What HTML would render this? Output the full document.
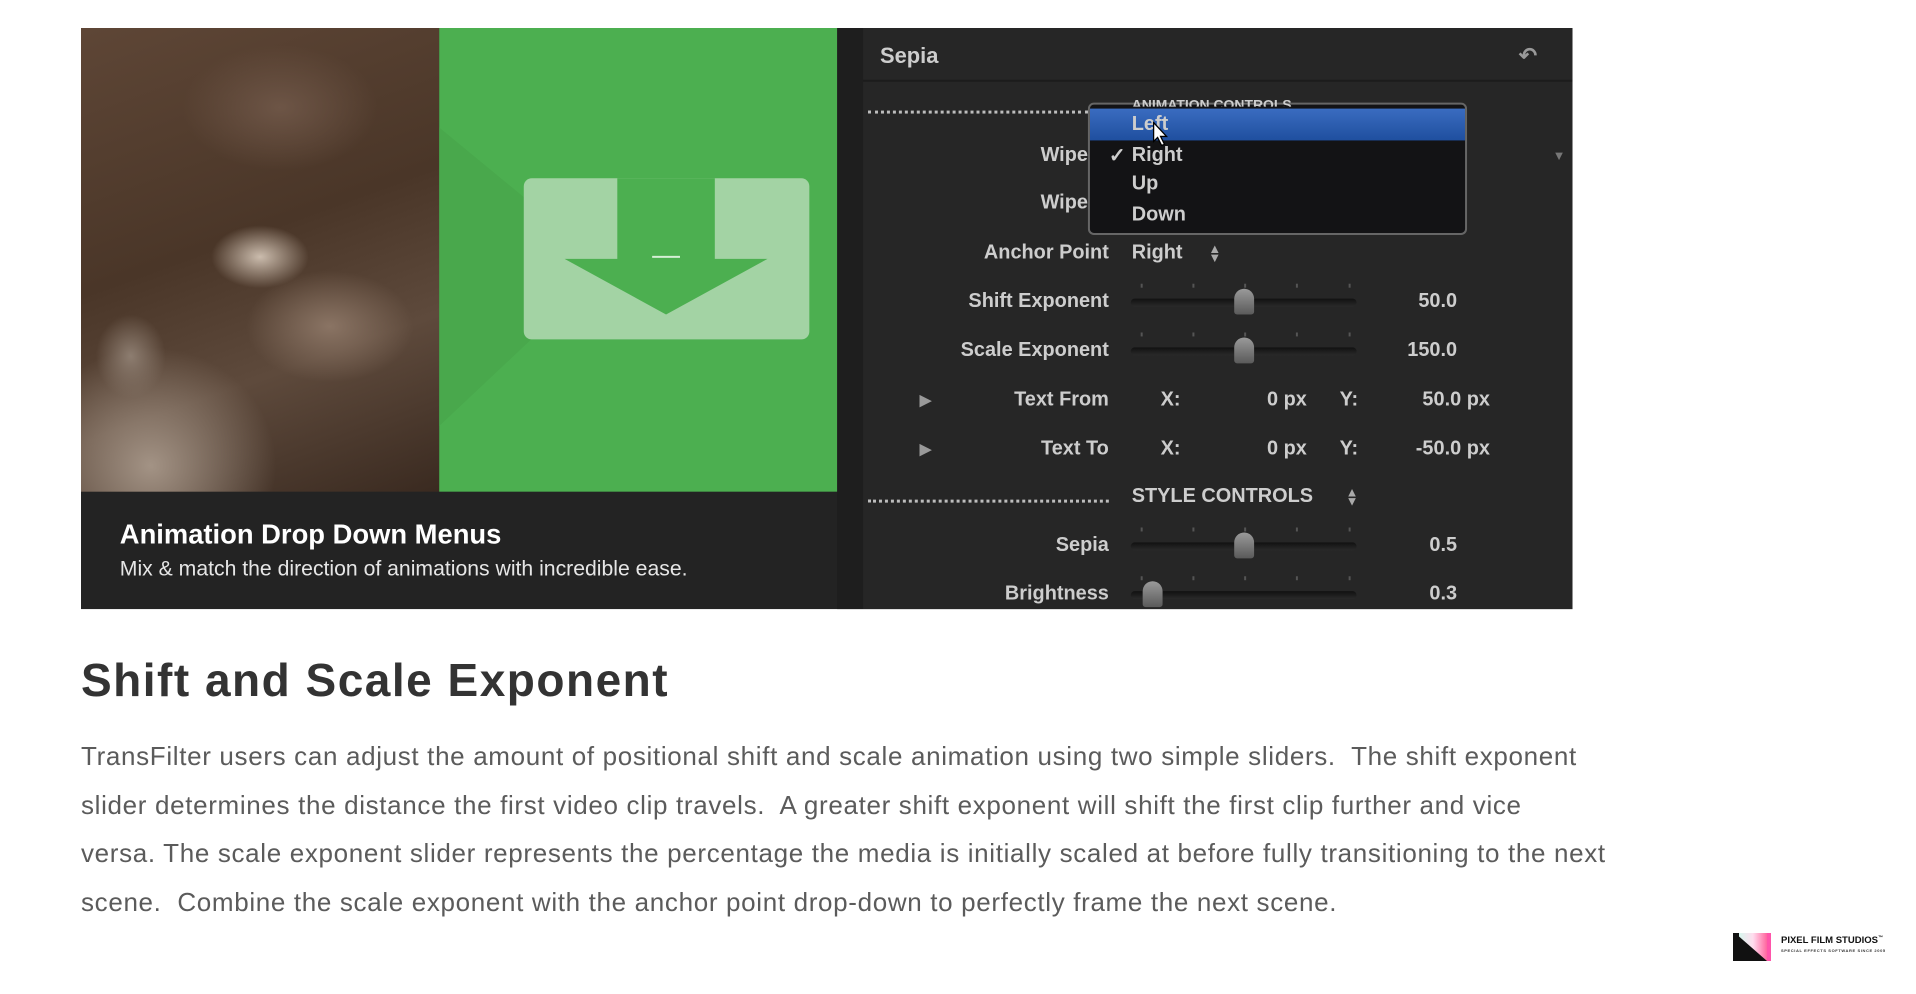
<!DOCTYPE html>
<html><head><meta charset="utf-8"><style>
*{margin:0;padding:0;box-sizing:border-box}
body{width:1916px;height:994px;background:#fff;position:relative;overflow:hidden;font-family:"Liberation Sans",Arial,sans-serif}
.a{position:absolute;white-space:nowrap}
.p{color:#cdcdcd;font-size:20px;font-weight:bold;transform:translateY(-50%)}
.r{text-align:right}
.dots{position:absolute;height:3px;border-top:3px dotted #bdbdbd}
.sl{position:absolute;left:1136px;width:227px;height:8px;border-radius:4px;background:linear-gradient(#111,#2a2a2a)}
.tick{position:absolute;width:2px;height:4px;background:#555}
.th{position:absolute;width:20px;height:26px;background:linear-gradient(#9a9a9a,#5a5a5a);border-radius:10px 10px 3px 3px}
.para{left:81px;font-size:26px;letter-spacing:0.66px;color:#5b5b5b;line-height:49px}
#img{position:absolute;left:0;top:0;width:1916px;height:640px;transform:scale(0.995);transform-origin:81px 28px}
</style></head><body>
<div id="img">
<div class="a" style="left:81px;top:28px;width:1499px;height:584px;background:#232323"></div>
<div class="a" style="left:81px;top:28px;width:360px;height:466px;background:
radial-gradient(ellipse 70px 45px at 180px 230px,#cbbcad,transparent 70%),
radial-gradient(ellipse 50px 60px at 50px 330px,#8d7d70,transparent 70%),
radial-gradient(ellipse 180px 170px at 70px 440px,#a39385,transparent 70%),
radial-gradient(ellipse 120px 80px at 250px 300px,#8a7464,transparent 70%),
radial-gradient(ellipse 140px 90px at 200px 80px,#6d5546,transparent 70%),
linear-gradient(160deg,#5e4636,#4a3628 45%,#5e4a3c 70%,#3a2a20)"></div>
<div class="a" style="left:441px;top:28px;width:400px;height:466px;background:#4caf50"></div>
<svg class="a" style="left:441px;top:28px" width="400" height="466">
<polygon points="0,100 170,240 0,400" fill="#49a84c"/>
<rect x="85" y="151" width="287" height="162" rx="8" fill="#a3d3a4"/>
<polygon points="179,151 277,151 277,232 330,232 228,288 126,232 179,232" fill="#4caf50"/>
<rect x="214" y="229" width="28" height="2" fill="#d6efd6"/>
</svg>
<div class="a" style="left:120px;top:521px;color:#fff;font-size:27.5px;font-weight:bold">Animation Drop Down Menus</div>
<div class="a" style="left:120px;top:559px;color:#e6e6e6;font-size:21.3px">Mix &amp; match the direction of animations with incredible ease.</div>
<div class="a" style="left:841px;top:28px;width:26px;height:584px;background:#1e1e1e"></div>
<div class="a" style="left:867px;top:28px;width:713px;height:584px;background:#262626"></div>
<div class="a" style="left:867px;top:80px;width:713px;height:2px;background:#1c1c1c"></div>
<div class="a p" style="left:884px;top:56px;font-size:22px">Sepia</div>
<div class="a p" style="left:1526px;top:56px;font-size:22px;color:#999">↶</div>
<div class="dots" style="left:872px;top:111px;width:221px"></div>
<div class="a p" style="left:1560px;top:156px;font-size:13px;color:#777">▼</div>
<div class="a p r" style="right:823px;top:156px">Wipe</div>
<div class="a p r" style="right:823px;top:204px">Wipe</div>
<div class="a" style="left:1093px;top:103px;width:381px;height:133px;background:#131315;border:2px solid #666;border-radius:6px;overflow:hidden">
<div style="position:absolute;left:0;top:4px;width:100%;height:32px;background:linear-gradient(#3a6cc0,#1f4f9f)"></div>
</div>
<div class="a" style="left:1137px;top:93px;width:200px;height:14px;color:#cdcdcd;font-size:14px;font-weight:bold;overflow:hidden;line-height:24px">ANIMATION CONTROLS</div>
<div class="a p" style="left:1137px;top:125px">Left</div>
<div class="a p" style="left:1114px;top:156px">✓</div>
<div class="a p" style="left:1137px;top:156px">Right</div>
<div class="a p" style="left:1137px;top:185px">Up</div>
<div class="a p" style="left:1137px;top:216px">Down</div>
<svg class="a" style="left:1158px;top:122px" width="16" height="26"><path d="M1 1 L1 20 L5 16 L9 24 L12 23 L8 15 L14 15 Z" fill="#fff" stroke="#000" stroke-width="1.3"/></svg>
<div class="a p r" style="right:802px;top:254px">Anchor Point</div>
<div class="a p" style="left:1137px;top:254px">Right</div>
<div class="a p" style="left:1214px;top:254px;font-size:13px;line-height:9px;color:#aaa">▲<br>▼</div>
<div class="a p r" style="right:802px;top:303px">Shift Exponent</div>
<div class="sl" style="top:300px"></div><div class="th" style="left:1240px;top:290px"></div>
<div class="a p r" style="right:452px;top:303px">50.0</div>
<div class="a p r" style="right:802px;top:352px">Scale Exponent</div>
<div class="sl" style="top:349px"></div><div class="th" style="left:1240px;top:339px"></div>
<div class="a p r" style="right:452px;top:352px">150.0</div>
<div class="a p" style="left:924px;top:402px;font-size:15px;color:#999">▶</div>
<div class="a p r" style="right:802px;top:402px">Text From</div>
<div class="a p" style="left:1166px;top:402px">X:</div>
<div class="a p r" style="right:603px;top:402px">0 px</div>
<div class="a p" style="left:1346px;top:402px">Y:</div>
<div class="a p r" style="right:419px;top:402px">50.0 px</div>
<div class="a p" style="left:924px;top:451px;font-size:15px;color:#999">▶</div>
<div class="a p r" style="right:802px;top:451px">Text To</div>
<div class="a p" style="left:1166px;top:451px">X:</div>
<div class="a p r" style="right:603px;top:451px">0 px</div>
<div class="a p" style="left:1346px;top:451px">Y:</div>
<div class="a p r" style="right:419px;top:451px">-50.0 px</div>
<div class="dots" style="left:872px;top:502px;width:242px"></div>
<div class="a p" style="left:1137px;top:499px">STYLE CONTROLS</div>
<div class="a p" style="left:1352px;top:499px;font-size:13px;line-height:9px;color:#aaa">▲<br>▼</div>
<div class="a p r" style="right:802px;top:548px">Sepia</div>
<div class="sl" style="top:545px"></div><div class="th" style="left:1240px;top:535px"></div>
<div class="a p r" style="right:452px;top:548px">0.5</div>
<div class="a p r" style="right:802px;top:597px">Brightness</div>
<div class="sl" style="top:594px"></div><div class="th" style="left:1148px;top:584px"></div>
<div class="a p r" style="right:452px;top:597px">0.3</div>
<div class="tick" style="left:1146px;top:285px"></div><div class="tick" style="left:1198px;top:285px"></div><div class="tick" style="left:1250px;top:285px"></div><div class="tick" style="left:1302px;top:285px"></div><div class="tick" style="left:1355px;top:285px"></div>
<div class="tick" style="left:1146px;top:334px"></div><div class="tick" style="left:1198px;top:334px"></div><div class="tick" style="left:1250px;top:334px"></div><div class="tick" style="left:1302px;top:334px"></div><div class="tick" style="left:1355px;top:334px"></div>
<div class="tick" style="left:1146px;top:530px"></div><div class="tick" style="left:1198px;top:530px"></div><div class="tick" style="left:1250px;top:530px"></div><div class="tick" style="left:1302px;top:530px"></div><div class="tick" style="left:1355px;top:530px"></div>
<div class="tick" style="left:1146px;top:579px"></div><div class="tick" style="left:1198px;top:579px"></div><div class="tick" style="left:1250px;top:579px"></div><div class="tick" style="left:1302px;top:579px"></div><div class="tick" style="left:1355px;top:579px"></div>
</div>
<div class="a" style="left:81px;top:653px;font-size:46px;font-weight:bold;letter-spacing:1.5px;color:#333">Shift and Scale Exponent</div>
<div class="a para" style="top:732px">TransFilter users can adjust the amount of positional shift and scale animation using two simple sliders.&nbsp; The shift exponent</div>
<div class="a para" style="top:781px">slider determines the distance the first video clip travels.&nbsp; A greater shift exponent will shift the first clip further and vice</div>
<div class="a para" style="top:829px">versa. The scale exponent slider represents the percentage the media is initially scaled at before fully transitioning to the next</div>
<div class="a para" style="top:878px">scene.&nbsp; Combine the scale exponent with the anchor point drop-down to perfectly frame the next scene.</div>
<svg class="a" style="left:1733px;top:931px" width="40" height="32">
<defs><linearGradient id="g" x1="0" x2="1"><stop offset="0" stop-color="#cfe"/><stop offset=".5" stop-color="#fde"/><stop offset="1" stop-color="#f48"/></linearGradient></defs>
<rect x="2" y="2" width="36" height="28" fill="url(#g)"/>
<polygon points="2,2 34,30 2,30" fill="#111"/>
<rect x="0" y="2" width="6" height="28" fill="#111"/>
<rect x="34" y="2" width="4" height="28" fill="#f5a"/>
</svg>
<div class="a" style="left:1781px;top:935px;font-size:9.5px;font-weight:bold;color:#111">PIXEL FILM STUDIOS<sup style="font-size:5px">™</sup></div>
<div class="a" style="left:1781px;top:948px;font-size:4px;font-weight:bold;color:#333;letter-spacing:.6px">SPECIAL EFFECTS SOFTWARE SINCE 2005</div>
</body></html>
